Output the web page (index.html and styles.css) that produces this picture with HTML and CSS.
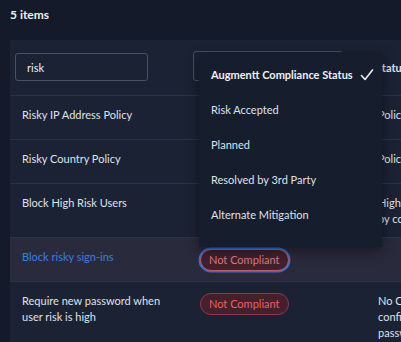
FILE: index.html
```html
<!DOCTYPE html>
<html lang="en">
<head>
    <meta charset="UTF-8">
    <meta name="viewport" content="width=device-width, initial-scale=1.0">
    <title>Policies</title>
    <link rel="stylesheet" href="styles.css">
</head>
<body>
    <div class="summary">5 items</div>

    <div class="card">
        <table class="policy-table">
            <colgroup>
                <col class="col-name">
                <col class="col-status">
                <col class="col-detail">
            </colgroup>
            <thead>
                <tr>
                    <th><input class="filter-input" type="text" value="risk"></th>
                    <th><div class="filter-select"></div></th>
                    <th class="heading">Status</th>
                </tr>
            </thead>
            <tbody>
                <tr>
                    <td>Risky IP Address Policy</td>
                    <td><span class="badge">Not Compliant</span></td>
                    <td>Policy not configured</td>
                </tr>
                <tr>
                    <td>Risky Country Policy</td>
                    <td><span class="badge">Not Compliant</span></td>
                    <td>Policy not configured</td>
                </tr>
                <tr>
                    <td>Block High Risk Users</td>
                    <td><span class="badge">Not Compliant</span></td>
                    <td>High risk users blocked<br>by conditional access</td>
                </tr>
                <tr class="hovered">
                    <td><a href="#" class="policy-link">Block risky sign-ins</a></td>
                    <td><span class="badge focused">Not Compliant</span></td>
                    <td></td>
                </tr>
                <tr>
                    <td>Require new password when user risk is high</td>
                    <td><span class="badge">Not Compliant</span></td>
                    <td>No Conditional Access<br>configured to require<br>password change</td>
                </tr>
            </tbody>
        </table>

        <ul class="dropdown">
            <li class="selected">
                Augmentt Compliance Status
                <svg class="check" width="14" height="12" viewBox="0 0 14 12">
                    <polyline points="1.5,6.5 5,10.5 12.5,1" fill="none" stroke="#e8ebf2" stroke-width="1.6" stroke-linecap="round" stroke-linejoin="round"/>
                </svg>
            </li>
            <li>Risk Accepted</li>
            <li>Planned</li>
            <li>Resolved by 3rd Party</li>
            <li>Alternate Mitigation</li>
        </ul>
    </div>
</body>
</html>
```

FILE: styles.css
```css
body {
    margin: 0;
    background-color: #141a29;
    font-family: Lato, "Noto Sans", sans-serif;
    font-size: 11px;
    color: #dfe3ea;
    overflow: hidden;
}
.summary {
    height: 40px;
    box-sizing: border-box;
    padding: 7px 10px;
    font-size: 12px;
    font-weight: bold;
    color: #eef0f5;
}
.card {
    position: relative;
    margin-left: 10px;
    width: 640px;
    min-height: 302px;
    background-color: #1b2234;
}
.policy-table {
    border-collapse: collapse;
    table-layout: fixed;
    width: 640px;
}
.col-name {
    width: 178px;
}
.col-status {
    width: 178px;
}
.policy-table th {
    height: 55px;
    box-sizing: border-box;
    padding: 13px 5px 13px;
    text-align: left;
    font-weight: normal;
    border-bottom: 1px solid #2d3346;
}
.policy-table th.heading {
    padding-left: 10px;
    font-weight: bold;
}
.policy-table td {
    padding: 11px 12px 10px;
    vertical-align: top;
    line-height: 16px;
    border-bottom: 1px solid #2d3346;
}
.filter-input {
    display: block;
    width: 133px;
    height: 28px;
    box-sizing: border-box;
    padding: 0 11px;
    border: 1px solid #485063;
    border-radius: 3px;
    background: transparent;
    color: #eef0f5;
    font-family: inherit;
    font-size: 11px;
}
.filter-select {
    width: 150px;
    height: 30px;
    box-sizing: border-box;
    margin-top: -2px;
    border: 1px solid #485063;
    border-radius: 3px;
}
.hovered td {
    background-color: #2a2a3d;
}
.policy-link {
    color: #3b7ee0;
    text-decoration: none;
}
.badge {
    display: inline-block;
    height: 22px;
    box-sizing: border-box;
    padding: 0 8px;
    line-height: 20px;
    border: 1px solid #9a3545;
    border-radius: 11px;
    background-color: #43202c;
    color: #ef5f5f;
    white-space: nowrap;
}
.badge.focused {
    color: #dd7a80;
    border-color: #c05a66;
    box-shadow: 0 0 0 1.5px #2f70d8;
}
.dropdown {
    position: absolute;
    left: 189px;
    top: 12px;
    width: 183px;
    margin: 0;
    padding: 5px 0 15px;
    list-style: none;
    background-color: #161d2d;
    box-shadow: 0 4px 12px rgba(0, 0, 0, 0.45);
}
.dropdown li {
    display: flex;
    align-items: center;
    justify-content: space-between;
    height: 35px;
    padding: 0 8px 0 12px;
    line-height: 16px;
    color: #dfe3ea;
}
.dropdown li.selected {
    font-weight: bold;
    color: #eef0f5;
}
.check {
    flex-shrink: 0;
}
```
